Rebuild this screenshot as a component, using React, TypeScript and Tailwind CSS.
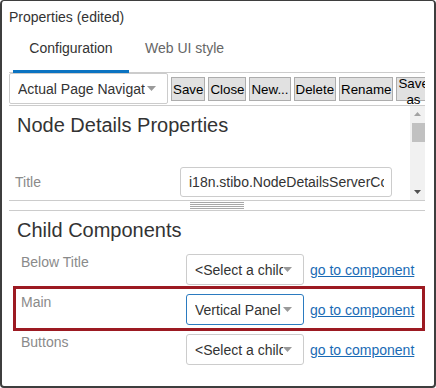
import React from "react";

function Caret() {
  return (
    <svg width="9" height="5" viewBox="0 0 9 5" className="shrink-0">
      <path d="M0 0h9L4.5 5z" fill="#9a9a9a" />
    </svg>
  );
}

function ChildSelect({ text, active }: { text: string; active?: boolean }) {
  return (
    <div
      className={
        active
          ? "flex h-[31px] w-[118px] shrink-0 items-center rounded-[3px] border border-[#2b7bc0] bg-white pl-[8px] pr-[11px]"
          : "flex h-[31px] w-[118px] shrink-0 items-center rounded-[3px] border border-[#cccccc] bg-white pl-[8px] pr-[11px]"
      }
    >
      <div className="min-w-0 flex-1 overflow-hidden whitespace-nowrap text-[14px] leading-[16px] text-[#333333]">
        {text}
      </div>
      <Caret />
    </div>
  );
}

function ToolButton({ label }: { label: string }) {
  return (
    <button className="mt-[4px] h-[24px] shrink-0 border border-[#adadad] bg-[#e1e1e1] px-[1px] text-[13.33px] leading-[15px] text-black">
      {label}
    </button>
  );
}

function ChildRow({ label, value, active }: { label: string; value: string; active?: boolean }) {
  return (
    <div className="flex h-[31px] items-start">
      <div className="w-[177px] shrink-0 pl-[12px] text-[14px] leading-[16px] text-[#8a8a8a]">{label}</div>
      <ChildSelect text={value} active={active} />
      <a className="ml-[6px] self-center whitespace-nowrap text-[14px] leading-[16px] text-[#1a6bb5] underline">
        go to component
      </a>
    </div>
  );
}

export default function App() {
  return (
    <div className="h-[388px] w-[436px] bg-white font-['Liberation_Sans',Arial,sans-serif]">
      <div className="flex h-full flex-col overflow-hidden rounded-[4px] border-2 border-t border-[#3e3e3e] pl-[7px] pr-[9px]">
        {/* Title */}
        <div className="pt-[8px] text-[14px] leading-[16px] text-[#333333]">Properties (edited)</div>

        {/* Tabs */}
        <div className="flex border-b border-[#cccccc]">
          <div className="-mb-px ml-[4px] w-[116px] border-b-[3px] border-[#0b73c1] pb-[14px] pt-[15px] text-center text-[14px] leading-[16px] text-[#333333]">
            Configuration
          </div>
          <div className="px-[16px] pt-[15px] text-[14px] leading-[16px] text-[#666666]">Web UI style</div>
        </div>

        {/* Toolbar */}
        <div className="flex h-[33px] shrink-0 items-start gap-[3px] overflow-hidden border-b border-[#cccccc]">
          <div className="flex h-[31px] w-[159px] shrink-0 items-center rounded-[2px] border border-[#cccccc] bg-white pl-[8px] pr-[11px]">
            <div className="min-w-0 flex-1 overflow-hidden whitespace-nowrap text-[14px] leading-[16px] text-[#333333]">
              Actual Page Navigation
            </div>
            <div className="ml-[2px] flex">
              <Caret />
            </div>
          </div>
          <ToolButton label="Save" />
          <ToolButton label="Close" />
          <ToolButton label="New..." />
          <ToolButton label="Delete" />
          <ToolButton label="Rename" />
          <button className="mt-[4px] h-[24px] w-[34px] shrink-0 overflow-visible border border-[#adadad] bg-[#e1e1e1] px-[1px] text-[13.33px] leading-[16px] text-black">
            <span className="-mt-[2px] block">Save as</span>
          </button>
        </div>

        {/* Scroll pane */}
        <div className="flex h-[95px] shrink-0 border-b border-[#cccccc]">
          <div className="min-w-0 flex-1 overflow-hidden">
            <div className="pl-[8px] pt-[8px] text-[20px] leading-[23px] text-[#333333]">Node Details Properties</div>
            <div className="mt-[30px] flex items-center">
              <div className="w-[171px] shrink-0 pl-[6px] text-[14px] leading-[16px] text-[#8a8a8a]">Title</div>
              <div className="flex h-[30px] w-[212px] shrink-0 items-center rounded-[3px] border border-[#cccccc] pl-[8px] pr-[7px]">
                <div className="min-w-0 flex-1 overflow-hidden whitespace-nowrap text-[14px] leading-[16px] text-[#333333]">
                  i18n.stibo.NodeDetailsServerComponent.Title
                </div>
              </div>
            </div>
          </div>
          <div className="flex w-[15px] shrink-0 flex-col bg-[#f1f1f1]">
            <div className="flex h-[16px] items-center justify-center">
              <svg width="7" height="4" viewBox="0 0 7 4">
                <path d="M0 4h7L3.5 0z" fill="#a3a3a3" />
              </svg>
            </div>
            <div className="ml-[2px] mt-[1px] h-[19px] bg-[#c1c1c1]" />
            <div className="flex-1" />
            <div className="flex h-[16px] items-center justify-center">
              <svg width="7" height="4" viewBox="0 0 7 4">
                <path d="M0 0h7L3.5 4z" fill="#505050" />
              </svg>
            </div>
          </div>
        </div>

        {/* Splitter */}
        <div className="flex h-[9px] shrink-0 flex-col items-center gap-px pt-px">
          <div className="h-px w-[54px] bg-[#a8a8a8]" />
          <div className="h-px w-[54px] bg-[#a8a8a8]" />
          <div className="h-px w-[54px] bg-[#a8a8a8]" />
          <div className="h-px w-[54px] bg-[#a8a8a8]" />
        </div>

        {/* Child components */}
        <div className="relative flex-1 border-t border-[#cccccc]">
          <div className="pl-[8px] pt-[8px] text-[20px] leading-[23px] text-[#333333]">Child Components</div>
          <div className="mt-[12px] flex flex-col gap-[9px]">
            <ChildRow label="Below Title" value="<Select a child>" />
            <ChildRow label="Main" value="Vertical Panel" active />
            <ChildRow label="Buttons" value="<Select a child>" />
          </div>
          <div className="absolute left-[4px] top-[75px] h-[45px] w-[412px] border-[3px] border-[#9c1a22]" />
        </div>
      </div>
    </div>
  );
}
